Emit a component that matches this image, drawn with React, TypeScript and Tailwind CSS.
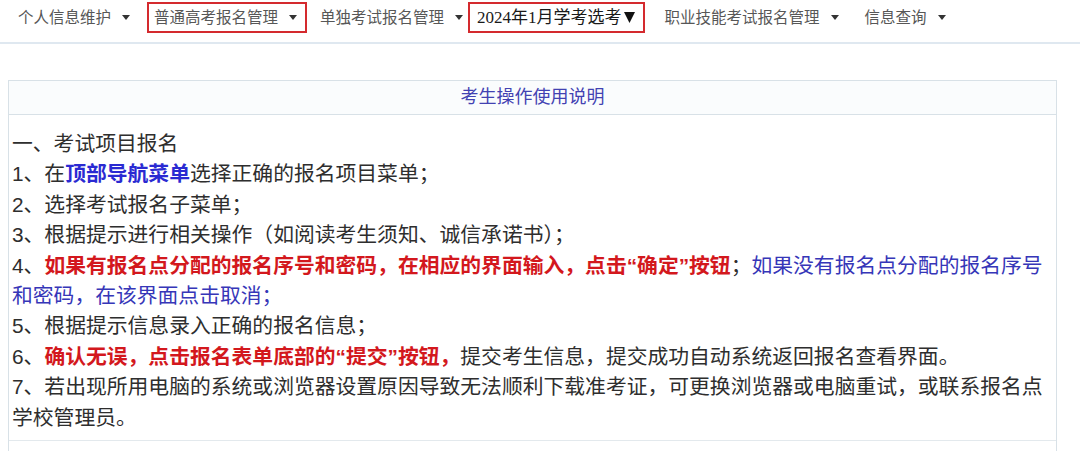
import React from "react";

const Caret = () => (
    <svg width="8" height="5" viewBox="0 0 8 5" className="ml-[11px] shrink-0">
        <path d="M0 0H8L4 5Z" fill="#333"/>
    </svg>
)

const NavItem = ({label, className = ""}: {label: string, className?: string}) => (
    <div className={`flex items-center h-[31px] ${className}`}>
        <span>{label}</span>
        <Caret/>
    </div>
)

const Red = ({children}: {children: React.ReactNode}) => (
    <span className="font-bold text-[#d3181d]">{children}</span>
)

export default function App() {
    const lines: React.ReactNode[] = [
        "一、考试项目报名",
        <>1、在<span className="font-bold text-[#2a2ad2]">顶部导航菜单</span>选择正确的报名项目菜单；</>,
        "2、选择考试报名子菜单；",
        "3、根据提示进行相关操作（如阅读考生须知、诚信承诺书）；",
        <>4、<Red>如果有报名点分配的报名序号和密码，在相应的界面输入，点击“确定”按钮</Red>；<span className="text-[#3636b8]">如果没有报名点分配的报名序号</span></>,
        <span className="text-[#3636b8]">和密码，在该界面点击取消；</span>,
        "5、根据提示信息录入正确的报名信息；",
        <>6、<Red>确认无误，点击报名表单底部的“提交”按钮，</Red>提交考生信息，提交成功自动系统返回报名查看界面。</>,
        "7、若出现所用电脑的系统或浏览器设置原因导致无法顺利下载准考证，可更换浏览器或电脑重试，或联系报名点",
        "学校管理员。",
    ]

    return (
        <div className="w-[1080px] h-[451px] overflow-hidden bg-white font-['Liberation_Sans','Noto_Sans_CJK_SC',sans-serif]">
            <nav className="flex items-start h-[44px] pt-[2px] border-b-2 border-[#dfe8f0] text-[15.5px] text-[#575757]">
                <NavItem label="个人信息维护" className="ml-[18px]"/>
                <div className="flex items-center h-[31px] ml-[17px] pl-[5px] pr-[8px] border-2 border-[#d42a2e]">
                    <span>普通高考报名管理</span>
                    <Caret/>
                </div>
                <NavItem label="单独考试报名管理" className="ml-[13px]"/>
                <div className="flex items-center h-[31px] ml-[5px] pl-[7px] pr-[8px] border-2 border-[#d42a2e] text-[17px] text-[#1a1a1a] font-['Liberation_Serif','Noto_Sans_CJK_SC',serif]">
                    <span>2024年1月学考选考</span>
                    <svg width="11" height="11" viewBox="0 0 11 11" className="ml-[2px]">
                        <path d="M0 0H11L5.5 11Z" fill="#111"/>
                    </svg>
                </div>
                <NavItem label="职业技能考试报名管理" className="ml-[20px]"/>
                <NavItem label="信息查询" className="ml-[26px]"/>
            </nav>

            <div className="mt-[36px] ml-[8px] w-[1049px] border border-[#d8e1e7]">
                <div className="h-[34px] flex items-center justify-center bg-[#fafcfd] border-b border-[#d8e1e7] text-[18px] text-[#4242b2]">
                    考生操作使用说明
                </div>
                <div className="pt-[14px] pl-[3px] pb-[7px] text-[20.8px] leading-[30.4px] text-[#2e2e2e] border-b border-[#e3e9ed]">
                    {lines.map((line, i) => (
                        <div key={i} className="whitespace-nowrap">{line}</div>
                    ))}
                </div>
                <div className="h-[20px]"/>
            </div>
        </div>
    )
}
